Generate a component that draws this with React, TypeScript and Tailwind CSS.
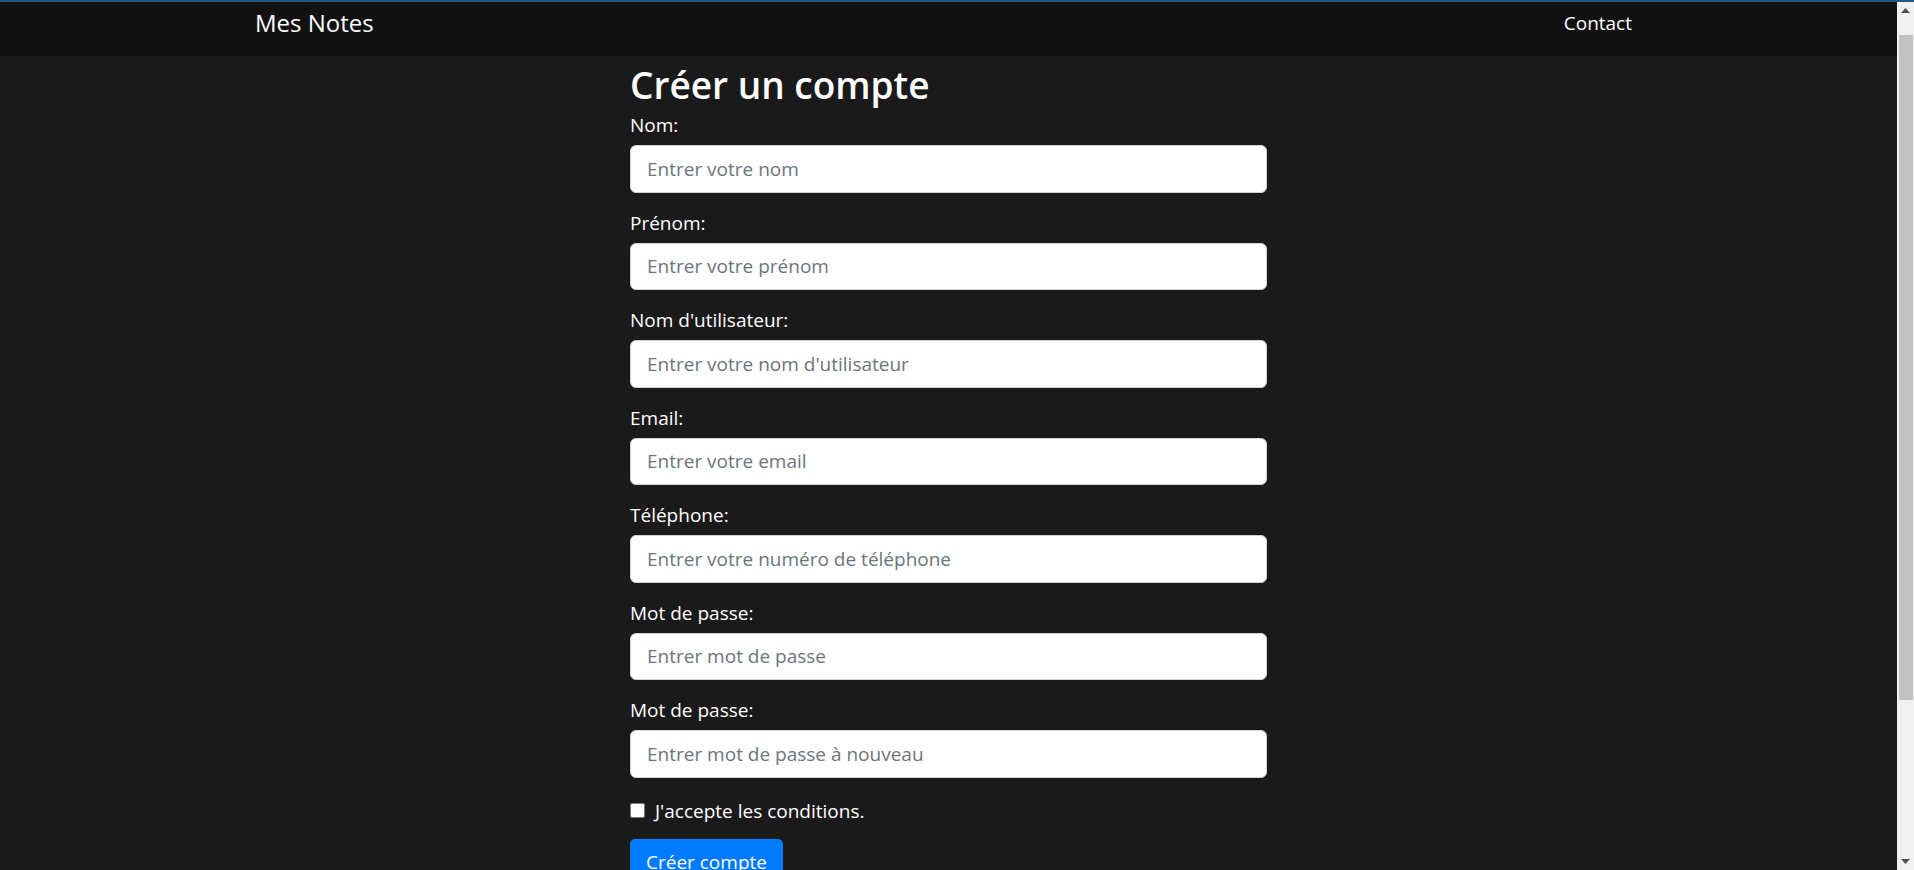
const fields = [
  { label: "Nom:", placeholder: "Entrer votre nom", type: "text" },
  { label: "Prénom:", placeholder: "Entrer votre prénom", type: "text" },
  { label: "Nom d'utilisateur:", placeholder: "Entrer votre nom d'utilisateur", type: "text" },
  { label: "Email:", placeholder: "Entrer votre email", type: "email" },
  { label: "Téléphone:", placeholder: "Entrer votre numéro de téléphone", type: "tel" },
  { label: "Mot de passe:", placeholder: "Entrer mot de passe", type: "password" },
  { label: "Mot de passe:", placeholder: "Entrer mot de passe à nouveau", type: "password" },
];

const Scrollbar = () => {
  return (
    <div className="w-[17px] h-full bg-[#f1f1f1] flex flex-col items-center">
      <div className="h-[17px] w-full flex items-center justify-center">
        <svg width="9" height="5" viewBox="0 0 9 5">
          <path d="M4.5 0 L9 5 L0 5 Z" fill="#505050" />
        </svg>
      </div>
      <div className="h-[16px]" />
      <div className="w-[14px] h-[665px] bg-[#c1c1c1]" />
      <div className="flex-1" />
      <div className="h-[17px] w-full flex items-center justify-center">
        <svg width="9" height="5" viewBox="0 0 9 5">
          <path d="M0 0 L9 0 L4.5 5 Z" fill="#505050" />
        </svg>
      </div>
    </div>
  );
};

const App = () => {
  return (
    <div
      className="w-full h-[870px] overflow-hidden flex flex-col bg-[#1b1a1b] text-white"
      style={{ fontFamily: '"Open Sans", "Noto Sans", sans-serif' }}
    >
      <div className="h-[2px] bg-[#1e5a80]" />
      <div className="flex flex-1 min-h-0">
        <div className="flex-1 overflow-hidden">
          <nav className="h-[54px] bg-[#111111] flex items-start justify-between pl-[255px] pr-[265px] pt-[2px]">
            <a className="text-[24px] leading-[38px] text-white">Mes Notes</a>
            <a className="text-[19px] leading-[38px] text-white">Contact</a>
          </nav>
          <form className="w-[637px] mx-auto">
            <h2 className="text-[37px] leading-[44px] font-semibold mt-[7px] mb-[3px]">
              Créer un compte
            </h2>
            <div className="flex flex-col gap-[15px]">
              {fields.map((f, i) => (
                <div key={i} className="flex flex-col">
                  <label className="text-[19px] leading-[30px] mb-[5px]">{f.label}</label>
                  <input
                    type={f.type}
                    placeholder={f.placeholder}
                    className="h-[47.5px] w-full px-[16px] text-[19px] bg-white text-[#495057] border border-[#ced4da] rounded-[6px] placeholder:text-[#6c757d] outline-none"
                  />
                </div>
              ))}
            </div>
            <div className="flex items-center gap-[10px] mt-[18px] h-[30px]">
              <input type="checkbox" className="w-[15px] h-[15px] m-0" />
              <span className="text-[19px] leading-[30px]">J'accepte les conditions.</span>
            </div>
            <button
              type="button"
              className="mt-[13px] h-[47.5px] px-[16px] text-[19px] bg-[#007bff] text-white rounded-[5px]"
            >
              Créer compte
            </button>
          </form>
        </div>
        <Scrollbar />
      </div>
    </div>
  );
};

export default App;
